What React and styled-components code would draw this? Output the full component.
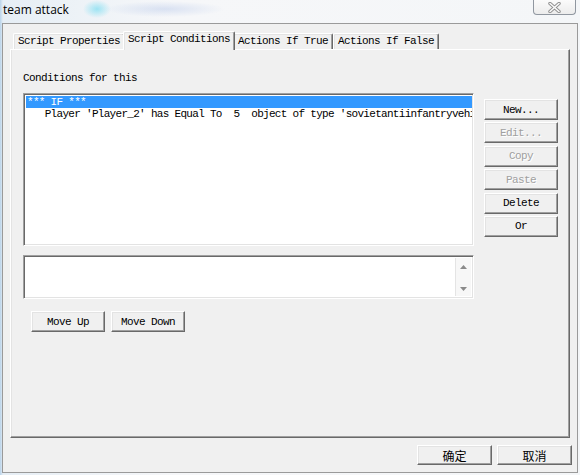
import React from 'react';
import styled, { createGlobalStyle } from 'styled-components';

const Global = createGlobalStyle`
  html, body { margin: 0; padding: 0; width: 580px; height: 475px; overflow: hidden; }
  body { font-family: "Liberation Mono", "DejaVu Sans Mono", monospace; }
  #root { width: 580px; height: 475px; }
`;

const mono = `
  font-family: "Liberation Mono", "DejaVu Sans Mono", monospace;
  font-size: 11px;
  letter-spacing: -0.6px;
`;

const raised = `
  border: 1px solid;
  border-color: #ffffff #696969 #696969 #ffffff;
  box-shadow: inset -1px -1px #a0a0a0, inset 1px 1px #e3e3e3;
`;

const sunken = `
  border: 1px solid;
  border-color: #a0a0a0 #ffffff #ffffff #a0a0a0;
  box-shadow: inset 1px 1px #696969, inset -1px -1px #e3e3e3;
`;

const Window = styled.div`
  width: 580px;
  height: 475px;
  box-sizing: border-box;
  display: flex;
  flex-direction: column;
  background:
    radial-gradient(ellipse 14px 9px at 97px 9px, rgba(90, 215, 240, 0.55), transparent),
    radial-gradient(ellipse 60px 8px at 165px 9px, rgba(150, 175, 225, 0.3), transparent),
    linear-gradient(90deg, #b9d3ea 0px, #e6eef5 3px, #f6f7f9 30%, #f4f6f8 100%);
`;

const TitleBar = styled.div`
  height: 23px;
  display: flex;
  align-items: flex-start;
  padding-left: 3px;
`;

const Title = styled.div`
  font-family: "Open Sans", "Noto Sans", sans-serif;
  font-size: 12px;
  line-height: 16px;
  margin-top: 2px;
  color: #000;
`;

const CloseButton = styled.div`
  margin-left: auto;
  margin-right: 4px;
  width: 43px;
  height: 15px;
  box-sizing: border-box;
  border: 1px solid #9097a0;
  border-top: none;
  border-radius: 0 0 4px 4px;
  background: linear-gradient(#fbfbfb, #ececec);
  display: flex;
  align-items: center;
  justify-content: center;
`;

const Client = styled.div`
  flex: 1;
  margin: 0 2px 2px 2px;
  border: 1px solid #9a9a9a;
  background: #f0f0f0;
  padding: 7px 7px 0 7px;
  display: flex;
  flex-direction: column;
`;

const TabStrip = styled.div`
  height: 18px;
  display: flex;
  align-items: flex-end;
  padding-left: 3px;
`;

const Tab = styled.div`
  ${mono}
  height: ${p => (p.$active ? 19 : 16)}px;
  box-sizing: border-box;
  padding: 0 4px;
  margin: ${p => (p.$active ? '0 -2px -1px' : '0')};
  line-height: 15px;
  white-space: pre;
  color: #000;
  background: #f0f0f0;
  border-left: 1px solid #ffffff;
  border-top: 1px solid #ffffff;
  border-right: 1px solid #696969;
  box-shadow: inset -1px 0 #a0a0a0, inset 1px 1px #e3e3e3;
  border-radius: 2px 2px 0 0;
  position: relative;
  z-index: ${p => (p.$active ? 1 : 0)};
`;

const Panel = styled.div`
  flex: 1;
  border-top: 1px solid #ffffff;
  border-left: 1px solid #ffffff;
  border-right: 1px solid #696969;
  border-bottom: 1px solid #696969;
  box-shadow: inset -1px -1px #a0a0a0, inset 1px 0 #e3e3e3;
  padding: 22px 0 0 12px;
  display: flex;
  flex-direction: column;
`;

const Label = styled.div`
  ${mono}
  line-height: 12px;
  color: #000;
  margin-bottom: 9px;
`;

const ListRow = styled.div`
  display: flex;
  align-items: flex-start;
  gap: 10px;
`;

const ListBox = styled.div`
  ${sunken}
  width: 451px;
  height: 153px;
  box-sizing: border-box;
  background: #fff;
  padding: 2px 1px 2px 2px;
  overflow: hidden;
`;

const Item = styled.div`
  ${mono}
  letter-spacing: -0.7px;
  height: 12px;
  line-height: 12px;
  white-space: pre;
  overflow: hidden;
  padding-left: 1px;
  background: ${p => (p.$selected ? '#3399ff' : 'transparent')};
  color: ${p => (p.$selected ? '#ffffff' : '#000000')};
`;

const ButtonColumn = styled.div`
  display: flex;
  flex-direction: column;
  gap: 2.4px;
  margin-top: 6px;
`;

const Button = styled.button`
  ${mono}
  ${raised}
  width: ${p => p.$w || 74}px;
  height: 21px;
  box-sizing: border-box;
  background: #f0f0f0;
  padding: 0;
  margin: 0;
  white-space: pre;
  color: ${p => (p.disabled ? '#a0a0a0' : '#000')};
  text-shadow: ${p => (p.disabled ? '1px 1px #ffffff' : 'none')};
  display: flex;
  align-items: center;
  justify-content: center;
`;

const TextBox = styled.div`
  ${sunken}
  width: 451px;
  height: 44px;
  box-sizing: border-box;
  margin-top: 9px;
  background: #fff;
  display: flex;
  padding: 2px;
`;

const TextArea = styled.div`
  flex: 1;
`;

const ScrollBar = styled.div`
  width: 15px;
  background: #f7f7f7;
  border-left: 1px solid #e4e4e4;
  display: flex;
  flex-direction: column;
  justify-content: space-between;
  align-items: center;
  padding: 7px 0 5px;
`;

const MoveRow = styled.div`
  display: flex;
  gap: 6px;
  margin-top: 12px;
  padding-left: 8px;
`;

const Footer = styled.div`
  height: 34px;
  box-sizing: border-box;
  display: flex;
  justify-content: flex-end;
  align-items: flex-start;
  gap: 5px;
  padding-top: 7px;
  margin-right: -2px;
`;

const DialogButton = styled.button`
  ${raised}
  width: 75px;
  height: 20px;
  box-sizing: border-box;
  background: #f0f0f0;
  padding: 0;
  margin: 0;
  font-family: "Noto Sans CJK SC", "Noto Sans", sans-serif;
  font-size: 12px;
  color: #000;
  display: flex;
  align-items: center;
  justify-content: center;
`;

const Arrow = ({ up }) => (
  <svg width="7" height="4" viewBox="0 0 7 4">
    <polygon points={up ? '3.5,0 7,4 0,4' : '0,0 7,0 3.5,4'} fill="#8a8a8a" />
  </svg>
);

const CloseGlyph = () => (
  <svg width="13" height="11" viewBox="0 0 13 11">
    <path d="M2 1.5 L11 9.5 M11 1.5 L2 9.5" stroke="#8f8f8f" strokeWidth="3.4" strokeLinecap="round" />
    <path d="M2 1.5 L11 9.5 M11 1.5 L2 9.5" stroke="#fafafa" strokeWidth="1.6" strokeLinecap="round" />
  </svg>
);

const tabs = ['Script Properties', 'Script Conditions', 'Actions If True', 'Actions If False'];

const actions = [
  { label: 'New...', disabled: false },
  { label: 'Edit...', disabled: true },
  { label: 'Copy', disabled: true },
  { label: 'Paste', disabled: true },
  { label: 'Delete', disabled: false },
  { label: 'Or', disabled: false },
];

export default function App() {
  return (
    <>
      <Global />
      <Window>
        <TitleBar>
          <Title>team attack</Title>
          <CloseButton>
            <CloseGlyph />
          </CloseButton>
        </TitleBar>
        <Client>
          <TabStrip>
            {tabs.map((t, i) => (
              <Tab key={t} $active={i === 1}>{t}</Tab>
            ))}
          </TabStrip>
          <Panel>
            <Label>Conditions for this</Label>
            <ListRow>
              <ListBox>
                <Item $selected>*** IF ***</Item>
                <Item>{"   Player 'Player_2' has Equal To  5  object of type 'sovietantiinfantryvehi"}</Item>
              </ListBox>
              <ButtonColumn>
                {actions.map(a => (
                  <Button key={a.label} disabled={a.disabled}>{a.label}</Button>
                ))}
              </ButtonColumn>
            </ListRow>
            <TextBox>
              <TextArea />
              <ScrollBar>
                <Arrow up />
                <Arrow />
              </ScrollBar>
            </TextBox>
            <MoveRow>
              <Button>Move Up</Button>
              <Button>Move Down</Button>
            </MoveRow>
          </Panel>
          <Footer>
            <DialogButton>确定</DialogButton>
            <DialogButton>取消</DialogButton>
          </Footer>
        </Client>
      </Window>
    </>
  );
}
